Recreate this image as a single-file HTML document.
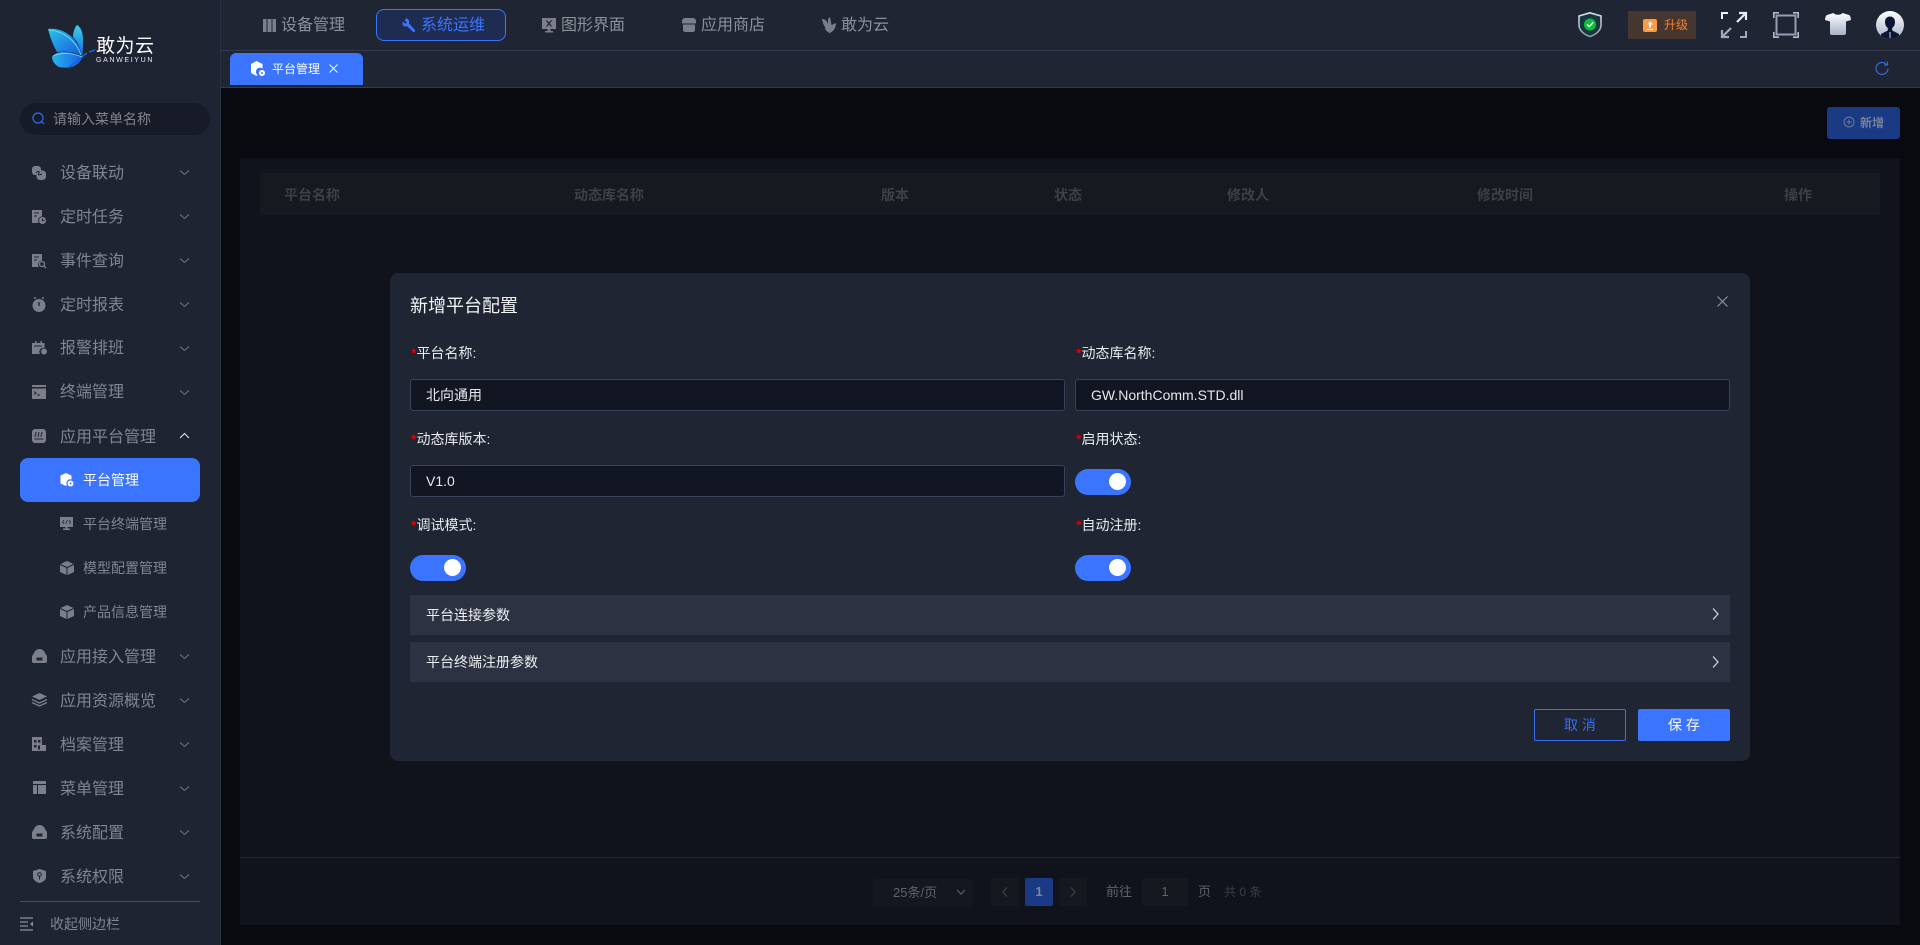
<!DOCTYPE html>
<html lang="zh"><head><meta charset="utf-8"><title>平台管理</title>
<style>
*{box-sizing:border-box}
html,body{margin:0;padding:0;width:1920px;height:945px;overflow:hidden;background:#090a0f;font-family:"Liberation Sans","Noto Sans CJK SC",sans-serif}
.a{position:absolute}
.t{position:absolute;white-space:nowrap;line-height:20px;height:20px}
svg{position:absolute;overflow:visible}
.m{font-size:16px;color:#82858f;left:60px}
.s{font-size:14px;color:#82858f;left:83px}
.n{font-size:16px;color:#8d9099;top:16px}
.th{font-size:14px;font-weight:700;color:#3d4045;top:185px}
.lb{font-size:14px;color:#e8eaee}
.lb b{color:#f00;font-weight:400}
.in{position:absolute;height:32px;background:#121623;border:1px solid #3a415a;border-radius:3px;color:#e6e8ec;font-size:14px;line-height:30px;padding-left:15px;white-space:nowrap}
.tg{position:absolute;width:56px;height:26px;border-radius:13px;background:#3a74ff}
.tg i{position:absolute;left:34px;top:4px;width:17px;height:17px;border-radius:50%;background:#fff}
.cl{position:absolute;left:410px;width:1320px;height:40px;background:#2c3241;color:#eef0f3;font-size:14px;line-height:40px;padding-left:16px}
.ch{fill:none;stroke:#7d808b;stroke-width:1}
.ic{fill:#7c7f8a}
</style></head><body>

<!-- main content (masked) -->
<div class="a" style="left:221px;top:88px;width:1699px;height:857px;background:#090a0f"></div>
<div class="a" style="left:240px;top:158px;width:1660px;height:767px;background:#10131b"></div>
<div class="a" style="left:260px;top:173px;width:1620px;height:42px;background:#151920"></div>
<span class="t th" style="left:284px">平台名称</span>
<span class="t th" style="left:574px">动态库名称</span>
<span class="t th" style="left:881px">版本</span>
<span class="t th" style="left:1054px">状态</span>
<span class="t th" style="left:1227px">修改人</span>
<span class="t th" style="left:1477px">修改时间</span>
<span class="t th" style="left:1784px">操作</span>
<div class="a" style="left:1827px;top:107px;width:73px;height:32px;background:#1b3a85;border-radius:3px"></div>
<svg style="left:1843px;top:116px" width="12" height="12" viewBox="0 0 12 12"><circle cx="6" cy="6" r="5" fill="none" stroke="#6e7891"/><path d="M3.5 6h5M6 3.5v5" stroke="#6e7891"/></svg>
<span class="t" style="left:1860px;top:113px;font-size:12px;font-weight:700;color:#7a8196">新增</span>

<div class="a" style="left:240px;top:857px;width:1660px;height:1px;background:#24272f"></div>
<div class="a" style="left:873px;top:879px;width:100px;height:28px;background:#14171f;border-radius:2px"></div>
<span class="t" style="left:893px;top:883px;font-size:13px;color:#5f6268">25条/页</span>
<svg style="left:956px;top:889px" width="10" height="6" viewBox="0 0 10 6"><path d="M1 1l4 4 4-4" fill="none" stroke="#5f6268" stroke-width="1.2"/></svg>
<div class="a" style="left:991px;top:878px;width:28px;height:28px;background:#15181f;border-radius:2px"></div>
<svg style="left:1001px;top:887px" width="8" height="10" viewBox="0 0 8 10"><path d="M6 0.5L2 5l4 4.5" fill="none" stroke="#3f4249" stroke-width="1.2"/></svg>
<div class="a" style="left:1025px;top:878px;width:28px;height:28px;background:#1b3a85;border-radius:2px;color:#7f8594;font-size:13px;font-weight:700;line-height:28px;text-align:center">1</div>
<div class="a" style="left:1059px;top:878px;width:28px;height:28px;background:#15181f;border-radius:2px"></div>
<svg style="left:1069px;top:887px" width="8" height="10" viewBox="0 0 8 10"><path d="M2 0.5L6 5l-4 4.5" fill="none" stroke="#3f4249" stroke-width="1.2"/></svg>
<span class="t" style="left:1106px;top:882px;font-size:13px;color:#5f6268">前往</span>
<div class="a" style="left:1142px;top:878px;width:46px;height:28px;background:#15181f;border-radius:2px;color:#5f6268;font-size:13px;line-height:28px;text-align:center">1</div>
<span class="t" style="left:1198px;top:882px;font-size:13px;color:#5f6268">页</span>
<span class="t" style="left:1224px;top:882px;font-size:12px;color:#3a3d44">共 0 条</span>

<!-- top bar -->
<div class="a" style="left:221px;top:0;width:1699px;height:88px;background:#1f2533"></div>
<div class="a" style="left:221px;top:50px;width:1699px;height:1px;background:#343a4c"></div>
<div class="a" style="left:221px;top:87px;width:1699px;height:1px;background:#343a4c"></div>

<svg style="left:263px;top:19px" width="13" height="13" viewBox="0 0 13 13"><path class="ic" d="M0 0h3.500v13H0zM4.500 0h4v13h-4zM9.500 0H13v13H9.500z"/></svg>
<span class="t n" style="left:281px">设备管理</span>
<div class="a" style="left:376px;top:9px;width:130px;height:32px;border:1px solid #3a74ff;border-radius:8px;background:#1f2c52"></div>
<svg style="left:402px;top:18px" width="14" height="14" viewBox="0 0 14 14"><path fill="#3a74ff" d="M4.500.2l-2 2 2.300 2.300-1.400 1.400L1 3.600C0 5.600.6 7.500 2.200 8.200c.9.400 1.800.3 2.700-.1l6 5.500c.6.600 1.400.5 1.900 0 .5-.5.5-1.300 0-1.800L7 5.500C7.500 3 6.800.9 4.500.2z"/></svg>
<span class="t n" style="left:421px;color:#3a74ff">系统运维</span>
<svg style="left:542px;top:18px" width="14" height="15" viewBox="0 0 14 15"><path class="ic" d="M0 0h14v11H8.500v2H11v1.500H3V13h2.500v-2H0z"/><path d="M4.500 2.500l5 6M9.500 2.500l-5 6" stroke="#1f2533" stroke-width="1.200"/></svg>
<span class="t n" style="left:561px">图形界面</span>
<svg style="left:682px;top:18px" width="14" height="14" viewBox="0 0 14 14"><path class="ic" d="M3 0h8c1.500 0 3 1.500 3 3v2.500H0V3c0-1.500 1.500-3 3-3zM1 6.500h12V12c0 1-1 2-2 2H3c-1 0-2-1-2-2z"/></svg>
<span class="t n" style="left:701px">应用商店</span>
<svg style="left:822px;top:17px" width="14" height="16" viewBox="0 0 14 16"><path class="ic" d="M0 2c3 0 5 2 6 5V2l2-2 1.500 8L14 6c0 4-2 8-6 10-3-1-5-3-5-6C1.500 8 .5 5 0 2z"/></svg>
<span class="t n" style="left:841px">敢为云</span>

<div class="a" style="left:230px;top:53px;width:133px;height:32px;background:#3a74ff;border-radius:6px 6px 0 0"></div>
<svg style="left:250px;top:61px" width="16" height="16" viewBox="0 0 16 16"><path fill="#fff" d="M6.500 0l6 3v4.500a4 4 0 00-5 6.500L6.500 15 1 12V3z"/><circle cx="12" cy="12" r="3" fill="#fff"/><circle cx="12" cy="12" r="1" fill="#3a74ff"/></svg>
<span class="t" style="left:272px;top:59px;font-size:12px;color:#fff">平台管理</span>
<svg style="left:329px;top:64px" width="9" height="9" viewBox="0 0 9 9"><path d="M.5.500l8 8M8.500.500l-8 8" stroke="#fff"/></svg>
<svg style="left:1875px;top:61px" width="14" height="14" viewBox="0 0 14 14"><path d="M11.500 3.500A6 6 0 1 0 13 7.500" fill="none" stroke="#3068e0" stroke-width="1.200"/><path d="M12.500.5v3.500H9" fill="none" stroke="#3068e0" stroke-width="1.200"/></svg>

<!-- top right -->
<svg style="left:1578px;top:12px" width="24" height="25" viewBox="0 0 24 25"><defs><linearGradient id="sg" x1="0" y1="0" x2="0" y2="1"><stop offset="0" stop-color="#d8dde6"/><stop offset="1" stop-color="#8e97a8"/></linearGradient></defs><path d="M12 .8L1 4v9c0 5.500 5 9.500 11 11.500C18 22.500 23 18.500 23 13V4z" fill="#16373d" stroke="url(#sg)" stroke-width="1.600"/><circle cx="12" cy="12.500" r="6" fill="#0bbf38"/><path d="M9 12.500l2.200 2 4-4" fill="none" stroke="#fff" stroke-width="1.500"/></svg>
<div class="a" style="left:1628px;top:11px;width:68px;height:28px;background:#453730"></div>
<svg style="left:1643px;top:19px" width="14" height="13" viewBox="0 0 14 13"><rect width="14" height="13" rx="2" fill="#fb9a47"/><path d="M7 2.500l3 3H8v3H6v-3H4zM4 10h6v1H4z" fill="#fff"/></svg>
<span class="t" style="left:1664px;top:15px;font-size:12px;color:#f5802d">升级</span>
<svg style="left:1721px;top:12px" width="26" height="26" viewBox="0 0 26 26"><path fill="none" stroke="#eef0f5" stroke-width="2" d="M7 1H1v6"/><path fill="none" stroke="#a1a9be" stroke-width="2" d="M19 25h6v-6"/><path fill="none" stroke="#e8ebf1" stroke-width="2.200" d="M16 10l8-8M18 1h7v7"/><path fill="none" stroke="#a1a9be" stroke-width="2.200" d="M10 16l-8 8M1 18v7h7"/></svg>
<svg style="left:1773px;top:12px" width="26" height="26" viewBox="0 0 26 26"><path fill="none" stroke="#b4bacb" stroke-width="1.600" d="M.800 6V.800H6M20 .800h5.200V6M25.200 20v5.200H20M6 25.200H.800V20"/><rect x="3.500" y="3.500" width="19" height="19" fill="none" stroke="#969eb4" stroke-width="2"/></svg>
<svg style="left:1825px;top:13px" width="26" height="22" viewBox="0 0 26 22"><defs><linearGradient id="g3" x1="0" y1="0" x2="0" y2="1"><stop offset="0" stop-color="#fbfcfd"/><stop offset="1" stop-color="#aab2c8"/></linearGradient></defs><path fill="url(#g3)" d="M8.500 0c1 1.200 2.500 1.800 4.500 1.800S16.500 1.200 17.500 0L24 2c1 .4 1.800 2 2 5l-5 1.500V20c0 1-.5 2-2 2H7c-1.500 0-2-1-2-2V8.500L0 7c.2-3 1-4.600 2-5z"/></svg>
<svg style="left:1876px;top:11px" width="28" height="28" viewBox="0 0 28 28"><defs><linearGradient id="g4" x1="0" y1="0" x2="0" y2="1"><stop offset="0" stop-color="#fff"/><stop offset="1" stop-color="#a9b1c8"/></linearGradient><clipPath id="cp"><circle cx="14" cy="14" r="14"/></clipPath></defs><circle cx="14" cy="14" r="14" fill="url(#g4)"/><g clip-path="url(#cp)"><path fill="#0c1633" d="M14 5.500c3 0 5 2.200 5 5.500 0 2.500-1.200 5-2.800 6v2.500L23 23v5H5v-5l6.800-3.500V17C10.200 16 9 13.500 9 11c0-3.300 2-5.500 5-5.500z"/><path stroke="#8d95ab" stroke-width="1.500" d="M14 21v6"/></g></svg>

<!-- sidebar -->
<div class="a" style="left:0;top:0;width:221px;height:945px;background:#1f2433;border-right:1px solid #2b3040"></div>
<svg style="left:0;top:0" width="221" height="90" viewBox="0 0 221 90"><defs>
<linearGradient id="w1" x1="0" y1="0" x2="1" y2="1"><stop offset="0" stop-color="#2dc2ea"/><stop offset="1" stop-color="#1259e0"/></linearGradient>
<linearGradient id="w2" x1="0" y1="0" x2="1" y2="0"><stop offset="0" stop-color="#2ab4ea"/><stop offset="1" stop-color="#1662e6"/></linearGradient>
<linearGradient id="w3" x1="0" y1="0" x2="0" y2="1"><stop offset="0" stop-color="#3dd0ea"/><stop offset="1" stop-color="#1167df"/></linearGradient></defs>
<path fill="url(#w3)" d="M77 25c4 2 6 8 6 15s0 13-1 17c-1-8-4-15-9-20 0-5 2-10 4-12z"/>
<path fill="url(#w1)" d="M48 29c9-1 17 2 24 8 5 5 9 12 10 19-7-4-17-5-25-4-4-7-7-15-9-23z"/>
<path fill="url(#w2)" d="M52 57c3-4 7-5 12-5 6 0 13 2 18 5 0 3-4 7-8 9-5 2-10 2-15 1-4-2-7-6-7-10z"/>
<path d="M68 68L87 53M89 52l6-2" stroke="#1662e6" stroke-width="1.500" fill="none"/>
<path d="M49 30c14 1 27 10 32 25M53 56c9-4 20-3 29 1" stroke="#7be0d8" stroke-width=".8" fill="none"/></svg>
<span class="t" style="left:96px;top:36px;height:22px;line-height:22px;font-size:19px;color:#fff;letter-spacing:.5px">敢为云</span>
<span class="t" style="left:96px;top:56px;height:10px;line-height:10px;font-size:7px;color:#e8eaef;letter-spacing:1.65px">GANWEIYUN</span>

<div class="a" style="left:20px;top:103px;width:190px;height:32px;border-radius:16px;background:#171b27"></div>
<svg style="left:32px;top:112px" width="13" height="13" viewBox="0 0 13 13"><circle cx="6" cy="6" r="5" fill="none" stroke="#2d6bf0" stroke-width="1.200"/><path d="M9.500 9.500l2.500 2.500" stroke="#2d6bf0" stroke-width="1.200"/></svg>
<span class="t" style="left:53px;top:109px;font-size:14px;color:#7f838e">请输入菜单名称</span>

<!-- menu items -->
<span class="t m" style="top:164px">设备联动</span>
<svg style="left:32px;top:166px" width="14" height="14" viewBox="0 0 14 14"><rect x="0" y="0" width="9" height="9" rx="3" class="ic"/><rect x="4.500" y="4.500" width="9.500" height="9.500" rx="3.500" class="ic"/><path d="M4 7c2-3 4-1 3 0s-1 3 3 1" stroke="#1f2433" fill="none"/></svg>
<span class="t m" style="top:208px">定时任务</span>
<svg style="left:32px;top:210px" width="14" height="14" viewBox="0 0 14 14"><path class="ic" d="M0 0h10v6.500a4 4 0 00-3 6.500H0z"/><circle cx="10.500" cy="10.500" r="3.500" class="ic"/><path d="M2 3h5M2 6h3" stroke="#1f2433"/><path d="M10.500 8.500v2h2" stroke="#1f2433" fill="none"/></svg>
<span class="t m" style="top:252px">事件查询</span>
<svg style="left:32px;top:254px" width="14" height="14" viewBox="0 0 14 14"><path class="ic" d="M0 0h10v6.500a4 4 0 00-3 6.500H0z"/><circle cx="10" cy="10" r="2.500" fill="none" stroke="#7c7f8a" stroke-width="1.300"/><path d="M12 12l2 2" stroke="#7c7f8a" stroke-width="1.300"/><path d="M2 3h5M2 6h3" stroke="#1f2433"/></svg>
<span class="t m" style="top:296px">定时报表</span>
<svg style="left:32px;top:297px" width="14" height="15" viewBox="0 0 14 15"><circle cx="7" cy="8.500" r="6.500" class="ic"/><path d="M2 1.500l2-1M12 1.500l-2-1" stroke="#7c7f8a" stroke-width="1.500"/><path d="M7 5v4" stroke="#1f2433" stroke-width="1.300"/></svg>
<span class="t m" style="top:339px">报警排班</span>
<svg style="left:32px;top:341px" width="15" height="14" viewBox="0 0 15 14"><path class="ic" d="M0 2h3V0h1.500v2h4V0H10v2h2.500v5a4 4 0 00-4.500 6H0z"/><circle cx="12" cy="10.500" r="3" class="ic"/><path d="M2 5h8" stroke="#1f2433"/></svg>
<span class="t m" style="top:383px">终端管理</span>
<svg style="left:32px;top:385px" width="14" height="14" viewBox="0 0 14 14"><path class="ic" d="M0 0h14v2H0zM0 3.500h14V14H0z"/><path d="M2 6.500l2 1.500-2 1.500M5 10h3" stroke="#1f2433" fill="none"/></svg>
<span class="t m" style="top:428px">应用平台管理</span>
<svg style="left:32px;top:429px" width="14" height="14" viewBox="0 0 14 14"><rect width="14" height="14" rx="3" class="ic"/><path d="M3 8c0-2 1-3 1-5M6 8c0-2 1-3 1-5M9 8c0-2 1-3 1-5M2.500 10h9" stroke="#1f2433" fill="none"/></svg>
<div class="a" style="left:20px;top:458px;width:180px;height:44px;border-radius:8px;background:#3a74ff"></div>
<svg style="left:60px;top:473px" width="14" height="14" viewBox="0 0 14 14"><path fill="#fff" d="M6 0l5.500 2.500v4a4 4 0 00-4.500 6L6 13 .5 10.500v-8z"/><circle cx="10.500" cy="10.500" r="3" fill="#fff"/><circle cx="10.500" cy="10.500" r="1" fill="#3a74ff"/></svg>
<span class="t s" style="top:470px;color:#fff">平台管理</span>
<svg style="left:60px;top:517px" width="14" height="14" viewBox="0 0 14 14"><path class="ic" d="M0 0h13v10H7.500v1.500H10V13H3v-1.500h2.500V10H0z"/><path d="M4 3L2.500 5 4 7M9 3l1.500 2L9 7M7.500 3l-2 4" stroke="#1f2433" fill="none" stroke-width=".8"/></svg>
<span class="t s" style="top:514px">平台终端管理</span>
<svg style="left:60px;top:561px" width="14" height="14" viewBox="0 0 14 14"><path class="ic" d="M7 0l6.500 3L7 6 .5 3zM0 4l6.500 3v7L0 11zM14 4L7.500 7v7L14 11z"/></svg>
<span class="t s" style="top:558px">模型配置管理</span>
<svg style="left:60px;top:605px" width="14" height="14" viewBox="0 0 14 14"><path class="ic" d="M7 0l6.500 3L7 6 .5 3zM0 4l6.500 3v7L0 11zM14 4L7.500 7v7L14 11z"/></svg>
<span class="t s" style="top:602px">产品信息管理</span>
<span class="t m" style="top:648px">应用接入管理</span>
<svg style="left:32px;top:649px" width="15" height="14" viewBox="0 0 15 14"><path class="ic" d="M7.500 0C10.500 0 12.500 2 13.500 5L15 7v5.500c0 .8-.7 1.500-1.500 1.500h-12C.7 14 0 13.300 0 12.500V7l1.500-2C2.500 2 4.500 0 7.500 0z"/><rect x="4.500" y="8.500" width="6" height="3" fill="#1f2433"/></svg>
<span class="t m" style="top:692px">应用资源概览</span>
<svg style="left:32px;top:693px" width="15" height="14" viewBox="0 0 15 14"><path class="ic" d="M7.500 0L15 3.500 7.500 7 0 3.500z"/><path d="M0 6.500l7.500 3.500 7.500-3.500M0 9.500L7.500 13l7.500-3.500" stroke="#7c7f8a" stroke-width="1.300" fill="none"/></svg>
<span class="t m" style="top:736px">档案管理</span>
<svg style="left:32px;top:737px" width="14" height="14" viewBox="0 0 14 14"><path class="ic" d="M0 0h10v8h4v6H0z"/><path d="M2 3h2.500v2.500H2zM6 3h2.500v2.500H6zM2 8h2.500v2.500H2zM6 8.500h2v4H6z" fill="#1f2433"/></svg>
<span class="t m" style="top:780px">菜单管理</span>
<svg style="left:33px;top:781px" width="13" height="13" viewBox="0 0 13 13"><path class="ic" d="M0 0h13v3H0zM0 4h4v9H0zM5 4h8v9H5z"/></svg>
<span class="t m" style="top:824px">系统配置</span>
<svg style="left:32px;top:825px" width="15" height="14" viewBox="0 0 15 14"><path class="ic" d="M7.500 0C10.500 0 12.500 2 13.500 5L15 7v5.500c0 .8-.7 1.500-1.500 1.500h-12C.7 14 0 13.300 0 12.500V7l1.500-2C2.500 2 4.500 0 7.500 0z"/><rect x="4.500" y="8.500" width="6" height="3" fill="#1f2433"/></svg>
<span class="t m" style="top:868px">系统权限</span>
<svg style="left:33px;top:869px" width="13" height="14" viewBox="0 0 13 14"><path class="ic" d="M6.500 0L13 2v6c0 3-3 5-6.500 6C3 13 0 11 0 8V2z"/><circle cx="6.500" cy="5.500" r="1.800" fill="none" stroke="#1f2433"/><path d="M6.500 7.500v3" stroke="#1f2433"/></svg>

<svg style="left:177px;top:0" width="14" height="900" viewBox="0 0 14 900" fill="none" stroke="#71747f"><path d="M3 170.500l4.500 4 4.500-4M3 214.500l4.500 4 4.500-4M3 258.500l4.500 4 4.500-4M3 302.500l4.500 4 4.500-4M3 346.500l4.500 4 4.500-4M3 390.500l4.500 4 4.500-4M3 654.500l4.500 4 4.500-4M3 698.500l4.500 4 4.500-4M3 742.500l4.500 4 4.500-4M3 786.500l4.500 4 4.500-4M3 830.500l4.500 4 4.500-4M3 874.500l4.500 4 4.500-4"/><path d="M3 438l4.500-4.500 4.500 4.500" stroke="#e8eaee"/></svg>
<div class="a" style="left:20px;top:901px;width:180px;height:1px;background:#4a4e5b"></div>
<svg style="left:20px;top:917px" width="14" height="14" viewBox="0 0 14 14"><path d="M0 1h13M0 13h13M0 5h8M0 9h8" stroke="#8b8e98" stroke-width="1.200"/><path d="M13 4.500v5L10 7z" fill="#8b8e98"/></svg>
<span class="t" style="left:50px;top:914px;font-size:14px;color:#82858f">收起侧边栏</span>

<!-- modal -->
<div class="a" style="left:390px;top:273px;width:1360px;height:488px;background:#1f2533;border-radius:8px"></div>
<span class="t" style="left:410px;top:296px;font-size:18px;color:#f2f3f5">新增平台配置</span>
<svg style="left:1717px;top:296px" width="11" height="11" viewBox="0 0 11 11"><path d="M.5.500l10 10M10.500.500l-10 10" stroke="#9a9da6"/></svg>

<span class="t lb" style="left:411px;top:343px"><b>*</b>平台名称:</span>
<span class="t lb" style="left:1076px;top:343px"><b>*</b>动态库名称:</span>
<div class="in" style="left:410px;top:379px;width:655px">北向通用</div>
<div class="in" style="left:1075px;top:379px;width:655px">GW.NorthComm.STD.dll</div>
<span class="t lb" style="left:411px;top:429px"><b>*</b>动态库版本:</span>
<span class="t lb" style="left:1076px;top:429px"><b>*</b>启用状态:</span>
<div class="in" style="left:410px;top:465px;width:655px">V1.0</div>
<div class="tg" style="left:1075px;top:469px"><i></i></div>
<span class="t lb" style="left:411px;top:515px"><b>*</b>调试模式:</span>
<span class="t lb" style="left:1076px;top:515px"><b>*</b>自动注册:</span>
<div class="tg" style="left:410px;top:555px"><i></i></div>
<div class="tg" style="left:1075px;top:555px"><i></i></div>

<div class="cl" style="top:595px">平台连接参数</div>
<div class="cl" style="top:642px">平台终端注册参数</div>
<svg style="left:1712px;top:608px" width="7" height="12" viewBox="0 0 7 12"><path d="M1 .5L6 6l-5 5.500" fill="none" stroke="#d5dfe8" stroke-width="1.200"/></svg>
<svg style="left:1712px;top:656px" width="7" height="12" viewBox="0 0 7 12"><path d="M1 .5L6 6l-5 5.500" fill="none" stroke="#d5dfe8" stroke-width="1.200"/></svg>

<div class="a" style="left:1534px;top:709px;width:92px;height:32px;border:1px solid #3a6ff0;border-radius:2px;color:#3a6ff0;font-size:14px;line-height:30px;text-align:center">取 消</div>
<div class="a" style="left:1638px;top:709px;width:92px;height:32px;background:#3a74ff;border-radius:2px;color:#fff;font-size:14px;line-height:32px;text-align:center">保 存</div>
</body></html>
